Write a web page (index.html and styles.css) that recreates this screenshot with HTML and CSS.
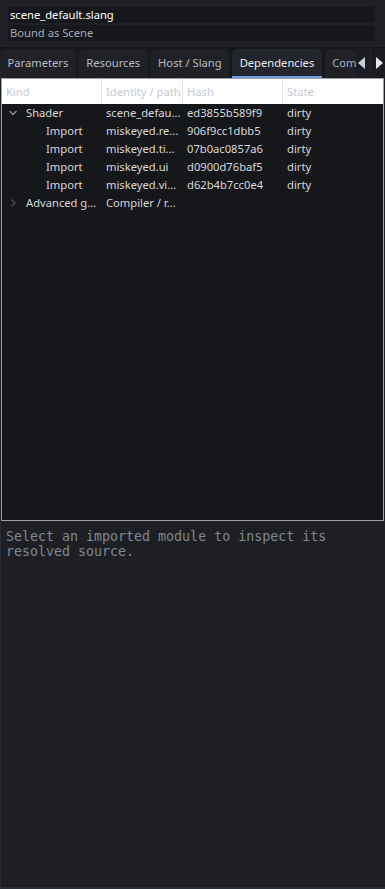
FILE: index.html
```html
<!DOCTYPE html>
<html>
<head>
<meta charset="utf-8">
<link rel="stylesheet" href="styles.css">
</head>
<body>
<div class="app">
  <div class="header">
    <div class="hrow title">scene_default.slang</div>
    <div class="hrow sub">Bound as Scene</div>
  </div>
  <div class="tabstrip">
    <div class="tabs">
      <div class="tab">Parameters</div>
      <div class="tab">Resources</div>
      <div class="tab">Host / Slang</div>
      <div class="tab active">Dependencies</div>
      <div class="tab clip">Com</div>
    </div>
    <div class="arrows">
      <svg class="arr" width="8" height="12" viewBox="0 0 8 12"><path d="M7 0 L0 6 L7 12 Z" fill="#c9ccd3"/></svg>
      <span class="asep"></span>
      <svg class="arr" width="8" height="12" viewBox="0 0 8 12"><path d="M1 0 L8 6 L1 12 Z" fill="#e6e8ec"/></svg>
    </div>
  </div>
  <div class="table">
    <div class="thead">
      <div class="th c1">Kind</div>
      <div class="th c2">Identity / path</div>
      <div class="th c3">Hash</div>
      <div class="th c4">State</div>
    </div>
    <div class="tbody">
      <div class="tr">
        <div class="td c1"><svg class="chev" width="10" height="10" viewBox="0 0 10 10"><path d="M1.5 3 L5 6.5 L8.5 3" fill="none" stroke="#8d9098" stroke-width="1.3"/></svg>Shader</div>
        <div class="td c2">scene_defau...</div>
        <div class="td c3">ed3855b589f9</div>
        <div class="td c4">dirty</div>
      </div>
      <div class="tr">
        <div class="td c1 ind">Import</div>
        <div class="td c2">miskeyed.re...</div>
        <div class="td c3">906f9cc1dbb5</div>
        <div class="td c4">dirty</div>
      </div>
      <div class="tr">
        <div class="td c1 ind">Import</div>
        <div class="td c2">miskeyed.ti...</div>
        <div class="td c3">07b0ac0857a6</div>
        <div class="td c4">dirty</div>
      </div>
      <div class="tr">
        <div class="td c1 ind">Import</div>
        <div class="td c2">miskeyed.ui</div>
        <div class="td c3">d0900d76baf5</div>
        <div class="td c4">dirty</div>
      </div>
      <div class="tr">
        <div class="td c1 ind">Import</div>
        <div class="td c2">miskeyed.vi...</div>
        <div class="td c3">d62b4b7cc0e4</div>
        <div class="td c4">dirty</div>
      </div>
      <div class="tr">
        <div class="td c1"><svg class="chev" width="10" height="10" viewBox="0 0 10 10"><path d="M3.5 1.5 L7 5 L3.5 8.5" fill="none" stroke="#4a4c53" stroke-width="1.3"/></svg>Advanced g...</div>
        <div class="td c2">Compiler / r...</div>
        <div class="td c3"></div>
        <div class="td c4"></div>
      </div>
    </div>
  </div>
  <div class="source">Select an imported module to inspect its
resolved source.</div>
</div>
</body>
</html>
```

FILE: styles.css
```css
html, body {
  margin: 0;
  padding: 0;
  background: #1e1f24;
}
body {
  width: 385px;
  height: 889px;
  overflow: hidden;
  font-family: "Noto Sans", "Open Sans", sans-serif;
  font-size: 11.2px;
}
.app {
  display: flex;
  flex-direction: column;
  height: 889px;
}
.header {
  display: flex;
  flex-direction: column;
  gap: 2px;
  padding: 7px 10px 6px 8px;
  background: #1f2026;
  border-bottom: 1px solid #131418;
}
.hrow {
  height: 16px;
  line-height: 16px;
  padding-left: 2px;
  background: #17181d;
}
.title {
  color: #ffffff;
}
.sub {
  color: #a6a9b0;
}
.tabstrip {
  display: flex;
  height: 30px;
  background: #17181c;
}
.tabs {
  display: flex;
  gap: 3px;
  flex: 1;
  overflow: hidden;
  padding-top: 1px;
}
.tab {
  flex: none;
  padding: 0 7.5px;
  height: 29px;
  line-height: 28px;
  color: #b5bac4;
  background: #202127;
  border-radius: 5px 5px 0 0;
  box-sizing: border-box;
}
.tab.active {
  background: #23252c;
  color: #e8eaee;
  border-bottom: 2px solid #6f9be0;
}
.tab.clip {
  width: 32px;
  overflow: hidden;
  padding-right: 0;
  white-space: nowrap;
  color: #aab0ba;
}
.arrows {
  display: flex;
  align-items: center;
  width: 29px;
  justify-content: space-around;
  background: #1b1c21;
}
.asep {
  width: 1px;
  height: 28px;
  background: #26272d;
}
.table {
  display: flex;
  flex-direction: column;
  height: 441px;
  margin: 0 1px;
  border: 1px solid #9ea0a6;
  background: #16171b;
}
.thead {
  display: flex;
  height: 25px;
  background: #ffffff;
}
.th {
  line-height: 25px;
  color: #c4c9d3;
  border-right: 1px solid #e4e5e8;
  box-sizing: border-box;
  padding-left: 4px;
  white-space: nowrap;
  overflow: hidden;
}
.c1 { width: 100px; }
.c2 { width: 81px; }
.c3 { width: 100px; }
.c4 { flex: 1; border-right: none; }
.tbody {
  display: flex;
  flex-direction: column;
}
.tr {
  display: flex;
  height: 18px;
  line-height: 18px;
  color: #d6d8dc;
}
.td {
  box-sizing: border-box;
  padding-left: 4px;
  white-space: nowrap;
  overflow: hidden;
  display: flex;
  align-items: center;
}
.td.c1 {
  padding-left: 6px;
}
.chev {
  margin-right: 8px;
  flex: none;
}
.td.ind {
  padding-left: 44px;
}
.source {
  flex: 1;
  margin-top: 2px;
  padding: 6px 5px;
  font-family: "DejaVu Sans Mono", monospace;
  font-size: 13.3px;
  line-height: 15px;
  color: #7f8893;
  white-space: pre-wrap;
  background: #1e1f24;
  border-left: 1px solid #2b2d35;
  border-bottom: 2px solid #2b2d35;
}
```
